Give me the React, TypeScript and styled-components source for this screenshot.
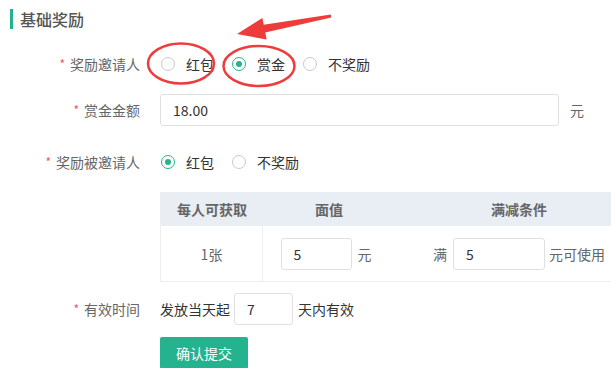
import React, { useState } from "react";
import styled, { createGlobalStyle } from "styled-components";

const green = "#25b38f";

const GlobalStyle = createGlobalStyle`
  html, body {
    margin: 0;
    padding: 0;
    background: #fff;
  }
  body {
    font-family: "Noto Sans CJK SC", "Noto Sans", sans-serif;
    font-size: 14px;
    color: #333;
  }
`;

const Side = styled.div`
  position: relative;
  width: 611px;
  height: 368px;
  overflow: hidden;
`;

const Tittel = styled.h2`
  margin: 9px 0 0 10px;
  height: 20px;
  line-height: 20px;
  border-left: 3px solid ${green};
  padding-left: 7px;
  font-size: 16px;
  font-weight: 500;
  color: #555;
`;

const Skjema = styled.div`
  display: flex;
  flex-direction: column;
`;

const Rad = styled.div<{ $top: number }>`
  display: flex;
  align-items: center;
  height: 32px;
  margin-top: ${(p) => p.$top}px;
`;

const Etikett = styled.label`
  width: 140px;
  flex: none;
  text-align: right;
  color: #666;
  font-size: 14px;
  line-height: 20px;
  padding-right: 20px;
  box-sizing: content-box;
  width: 140px;
  margin-right: 0;
`;

const Stjerne = styled.span`
  color: #f2546b;
  font-size: 12px;
  margin-right: 5px;
  position: relative;
  top: -1px;
`;

const Innhold = styled.div`
  display: flex;
  align-items: center;
  margin-left: -20px;
  padding-left: 20px;
`;

const RadioGruppe = styled.div`
  display: flex;
  align-items: center;
  gap: 18px;
  margin-left: 1px;
`;

const RadioValg = styled.span`
  display: inline-flex;
  align-items: center;
  gap: 11px;
  color: #333;
  line-height: 20px;
  cursor: pointer;
`;

const Sirkel = styled.span<{ $valgt: boolean }>`
  width: 14px;
  height: 14px;
  box-sizing: border-box;
  border-radius: 50%;
  border: 1px solid ${(p) => (p.$valgt ? green : "#c9c9c9")};
  display: inline-flex;
  align-items: center;
  justify-content: center;

  &::after {
    content: "";
    width: 6px;
    height: 6px;
    border-radius: 50%;
    background: ${green};
    display: ${(p) => (p.$valgt ? "block" : "none")};
  }
`;

const Felt = styled.input<{ $bredde: number }>`
  width: ${(p) => p.$bredde}px;
  height: 32px;
  box-sizing: border-box;
  border: 1px solid #e0e0e0;
  border-radius: 3px;
  padding: 0 12px;
  font-family: inherit;
  font-size: 14px;
  color: #333;
  outline: none;
`;

const Enhet = styled.span<{ $farge?: string }>`
  color: ${(p) => p.$farge ?? "#666"};
  line-height: 20px;
  margin: 0 6px;
`;

const Tabell = styled.div`
  margin: 14px 0 0 160px;
  width: 482px;
  border-left: 1px solid #eeeeee;
  border-bottom: 1px solid #eeeeee;
`;

const Hode = styled.div`
  display: grid;
  grid-template-columns: 102px 132px 248px;
  height: 34px;
  align-items: center;
  background: #e9edf4;
  color: #666;
  font-weight: 700;
  text-align: center;
`;

const Kropp = styled.div`
  display: grid;
  grid-template-columns: 102px 132px 248px;
  height: 55px;
`;

const Celle = styled.div<{ $skille?: boolean }>`
  display: flex;
  align-items: center;
  justify-content: center;
  border-right: ${(p) => (p.$skille ? "1px solid #eeeeee" : "none")};
  color: #666;
`;

const Knapp = styled.button`
  margin: 12px 0 0 160px;
  width: 88px;
  height: 32px;
  border: none;
  border-radius: 2px;
  background: ${green};
  color: #fff;
  font-family: inherit;
  font-size: 14px;
  cursor: pointer;
`;

const Markering = styled.svg`
  position: absolute;
  left: 0;
  top: 0;
  pointer-events: none;
`;

interface Valg {
    navn: string;
}

const Radio = ({ valg, valgt, onVelg }: { valg: Valg[]; valgt: string; onVelg: (v: string) => void }) => (
    <RadioGruppe>
        {valg.map((v) => (
            <RadioValg key={v.navn} onClick={() => onVelg(v.navn)}>
                <Sirkel $valgt={valgt === v.navn} />
                {v.navn}
            </RadioValg>
        ))}
    </RadioGruppe>
);

export default function App() {
    const [invitør, setInvitør] = useState("赏金");
    const [invitert, setInvitert] = useState("红包");

    return (
        <Side>
            <GlobalStyle />
            <Tittel>基础奖励</Tittel>
            <Skjema>
                <Rad $top={19}>
                    <Etikett><Stjerne>*</Stjerne>奖励邀请人</Etikett>
                    <Radio
                        valg={[{ navn: "红包" }, { navn: "赏金" }, { navn: "不奖励" }]}
                        valgt={invitør}
                        onVelg={setInvitør}
                    />
                </Rad>
                <Rad $top={14}>
                    <Etikett><Stjerne>*</Stjerne>赏金金额</Etikett>
                    <Felt $bredde={399} defaultValue="18.00" />
                    <Enhet style={{ marginLeft: 11 }}>元</Enhet>
                </Rad>
                <Rad $top={20}>
                    <Etikett><Stjerne>*</Stjerne>奖励被邀请人</Etikett>
                    <Radio
                        valg={[{ navn: "红包" }, { navn: "不奖励" }]}
                        valgt={invitert}
                        onVelg={setInvitert}
                    />
                </Rad>
            </Skjema>
            <Tabell>
                <Hode>
                    <span>每人可获取</span>
                    <span>面值</span>
                    <span>满减条件</span>
                </Hode>
                <Kropp>
                    <Celle $skille>1张</Celle>
                    <Celle>
                        <Felt $bredde={71} defaultValue="5" />
                        <Enhet>元</Enhet>
                    </Celle>
                    <Celle>
                        <Enhet>满</Enhet>
                        <Felt $bredde={92} defaultValue="5" />
                        <Enhet style={{ marginLeft: 4 }}>元可使用</Enhet>
                    </Celle>
                </Kropp>
            </Tabell>
            <Rad $top={11}>
                <Etikett><Stjerne>*</Stjerne>有效时间</Etikett>
                <Enhet $farge="#333" style={{ margin: "0 4px 0 0" }}>发放当天起</Enhet>
                <Felt $bredde={59} defaultValue="7" />
                <Enhet $farge="#333" style={{ marginLeft: 5 }}>天内有效</Enhet>
            </Rad>
            <Knapp>确认提交</Knapp>

            <Markering width={611} height={368}>
                <ellipse cx={181} cy={63.5} rx={33} ry={20} fill="none" stroke="#ee3b3b" strokeWidth={2.5} />
                <ellipse cx={259} cy={66} rx={35.5} ry={20} fill="none" stroke="#ee3b3b" strokeWidth={2.5} />
                <polygon
                    points="237,34 266.6,39.5 265.3,32.6 331.2,17.5 330.8,14.5 263.7,24.8 262.4,17.9"
                    fill="#ee3b3b"
                />
            </Markering>
        </Side>
    );
}
